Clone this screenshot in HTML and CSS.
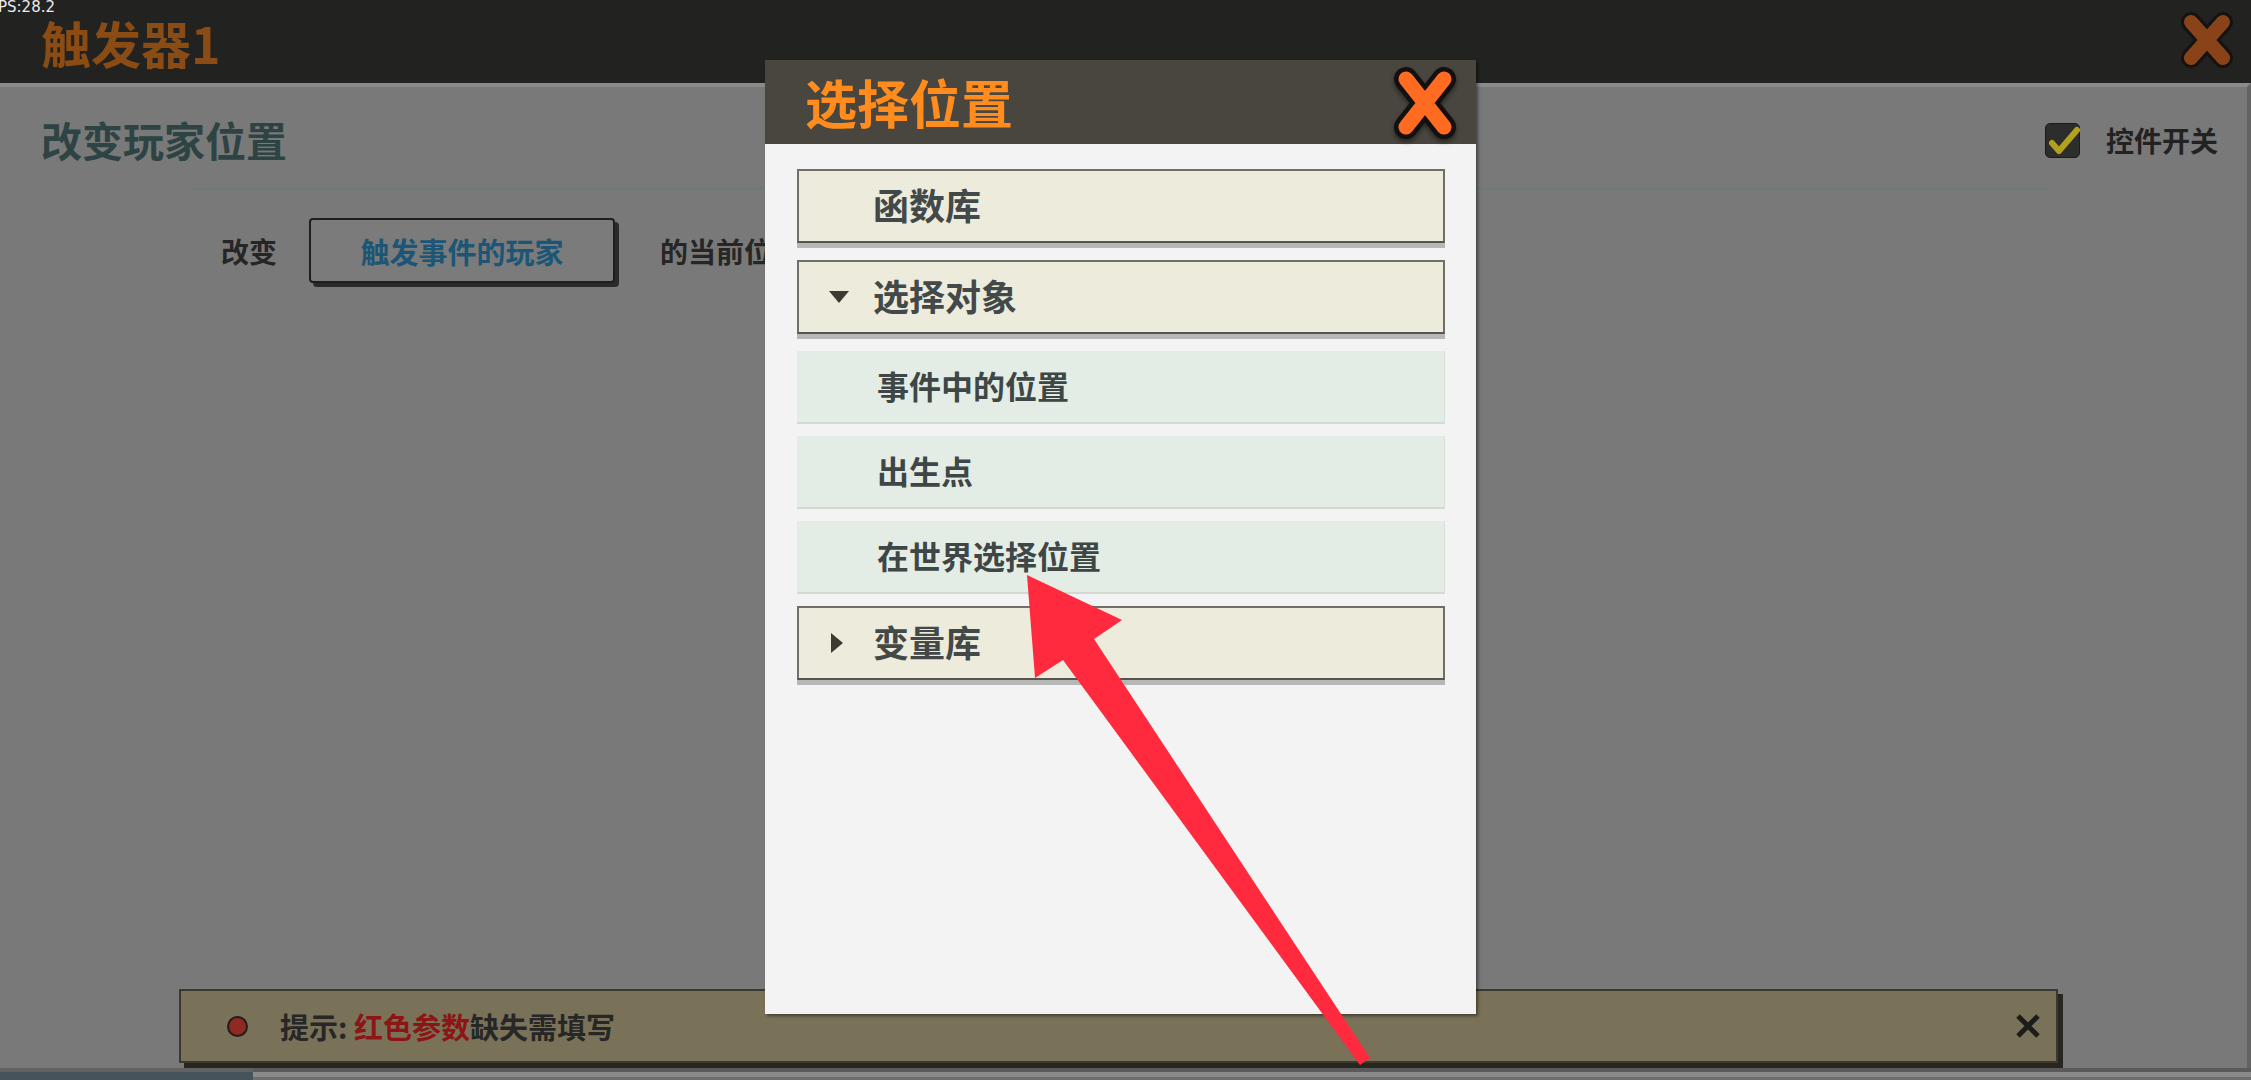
FILE: index.html
```html
<!DOCTYPE html>
<html lang="zh-CN">
<head>
<meta charset="utf-8">
<title>触发器1</title>
<link rel="stylesheet" href="styles.css">
</head>
<body>
<div class="screen">
  <span class="fps">PS:28.2</span>
  <header class="topbar">
    <h1 class="app-title">触发器1</h1>
    <span class="close-big">
      <svg viewBox="0 0 56 60" width="56" height="60">
        <path d="M12 12 L44 48 M44 12 L12 48" stroke="#151311" stroke-width="20" stroke-linecap="round" fill="none"/>
        <path d="M12 12 L44 48 M44 12 L12 48" stroke="#8a4319" stroke-width="14" stroke-linecap="round" fill="none"/>
      </svg>
    </span>
  </header>

  <main class="panel">
    <div class="panel-head">
      <h2 class="action-title">改变玩家位置</h2>
      <div class="toggle">
        <span class="checkbox">
          <svg viewBox="0 0 35 35" width="35" height="35">
            <path d="M6 19 L13 27 L31 6" stroke="#b3a01f" stroke-width="6" stroke-linecap="round" stroke-linejoin="round" fill="none"/>
          </svg>
        </span>
        <span>控件开关</span>
      </div>
    </div>
    <div class="divider"></div>
    <div class="sentence">
      <span>改变</span>
      <span class="param">触发事件的玩家</span>
      <span>的当前位置为</span>
    </div>

    <div class="notice">
      <span class="dot"></span>
      <span class="notice-text">提示: <span class="req">红色参数</span>缺失需填写</span>
      <span class="notice-close">
        <svg viewBox="0 0 28 28" width="28" height="28">
          <path d="M4 4 L24 24 M24 4 L4 24" stroke="#1c1c1a" stroke-width="5" fill="none"/>
        </svg>
      </span>
    </div>
  </main>
  <div class="bottom-strip">
    <span class="strip-left"></span>
    <span class="strip-right"></span>
  </div>

  <section class="modal">
    <div class="modal-head">
      <h3 class="modal-title">选择位置</h3>
      <span class="modal-close">
        <svg viewBox="0 0 72 78" width="72" height="78">
          <path d="M17 15 L55 63 M55 15 L17 63" stroke="#121110" stroke-width="24" stroke-linecap="round" fill="none"/>
          <path d="M17 15 L55 63 M55 15 L17 63" stroke="#ff6b21" stroke-width="15" stroke-linecap="round" fill="none"/>
        </svg>
      </span>
    </div>
    <div class="modal-body">
      <div class="group"><span class="caret-slot"></span>函数库</div>
      <div class="group"><span class="caret-slot"><span class="caret-down"></span></span>选择对象</div>
      <div class="option">事件中的位置</div>
      <div class="option">出生点</div>
      <div class="option">在世界选择位置</div>
      <div class="group"><span class="caret-slot"><span class="caret-right"></span></span>变量库</div>
    </div>
  </section>

  <svg class="arrow" viewBox="0 0 2251 1080" width="2251" height="1080">
    <polygon points="1027,575 1122,620 1094,639 1370,1058 1360,1065 1063,660 1035,678" fill="#ff2a3d"/>
  </svg>
</div>
</body>
</html>
```

FILE: styles.css
```css
* {
  box-sizing: border-box;
  margin: 0;
  padding: 0;
}

html,
body {
  width: 2251px;
  height: 1080px;
  overflow: hidden;
}

body {
  font-family: "Noto Sans CJK SC", "Noto Sans", sans-serif;
  background: #797979;
}

.screen {
  position: relative;
  width: 2251px;
  height: 1080px;
  display: flex;
  flex-direction: column;
}

.fps {
  position: absolute;
  left: -2px;
  top: -1px;
  font-family: "DejaVu Sans", sans-serif;
  font-size: 15px;
  line-height: 16px;
  color: #ececec;
  z-index: 5;
}

/* top bar */
.topbar {
  height: 83px;
  flex: none;
  background: #222220;
  display: flex;
  align-items: center;
  justify-content: space-between;
  padding: 0 16px 0 41px;
}

.app-title {
  font-size: 50px;
  font-weight: 700;
  line-height: 1;
  color: #8a4b15;
}

.close-big {
  display: block;
  width: 56px;
  height: 60px;
  margin-top: -4px;
}

.close-big svg,
.modal-close svg,
.notice-close svg,
.checkbox svg {
  display: block;
}

/* main panel */
.panel {
  flex: 1;
  display: flex;
  flex-direction: column;
  background: #797979;
  border-top: 4px solid #8b8b8b;
  border-right: 4px solid #636363;
}

.panel-head {
  height: 100px;
  padding: 6px 29px 0 41px;
  display: flex;
  align-items: center;
  justify-content: space-between;
}

.action-title {
  font-size: 41px;
  font-weight: 700;
  line-height: 1.2;
  color: #2e4343;
}

.toggle {
  display: flex;
  align-items: center;
  gap: 26px;
  font-size: 28px;
  font-weight: 700;
  color: #222222;
}

.checkbox {
  display: block;
  width: 35px;
  height: 35px;
  border-radius: 5px;
  background: #2d2d2c;
  border: 1px solid #1b1b1b;
  overflow: visible;
}

.divider {
  height: 3px;
  margin: 0 197px 0 191px;
  background: #6c7b74;
}

.sentence {
  display: flex;
  align-items: center;
  margin-top: 28px;
  padding-left: 221px;
  font-size: 28px;
  font-weight: 700;
  color: #262626;
}

.param {
  width: 306px;
  height: 65px;
  margin: 0 45px 0 32px;
  display: flex;
  align-items: center;
  justify-content: center;
  border: 2px solid #1e1e1e;
  border-radius: 4px;
  background: #7b7b7b;
  box-shadow: 4px 4px 0 #2a2a29;
  font-size: 29px;
  color: #1c5676;
}

/* notice */
.notice {
  margin: auto 0 5px 179px;
  width: 1879px;
  height: 74px;
  flex: none;
  display: flex;
  align-items: center;
  padding: 0 14px 0 46px;
  background: #7a7258;
  border: 2px solid #3b392f;
  box-shadow: 5px 5px 0 #27261f;
  font-size: 29px;
  font-weight: 700;
  color: #272727;
}

.dot {
  width: 21px;
  height: 21px;
  flex: none;
  border-radius: 50%;
  background: #8e2a21;
  border: 2px solid #1e1e1e;
  margin-right: 32px;
}

.notice-text {
  flex: 1;
}

.req {
  color: #8c1515;
}

.notice-close {
  display: block;
  width: 28px;
  height: 28px;
}

.bottom-strip {
  height: 12px;
  flex: none;
  display: flex;
  background: #5e5e5e;
}

.strip-left {
  width: 253px;
  background: #45535a;
  border-top: 4px solid #626262;
}

.strip-right {
  flex: 1;
  border-top: 4px solid #5a5a5a;
  border-bottom: 3px solid #6e6e6e;
  background: #8a8a8a;
}

/* modal */
.modal {
  position: absolute;
  left: 765px;
  top: 60px;
  width: 711px;
  height: 954px;
  display: flex;
  flex-direction: column;
  background: #f3f3f3;
  box-shadow: 2px 2px 3px rgba(0, 0, 0, 0.45);
  z-index: 2;
}

.modal-head {
  height: 84px;
  flex: none;
  display: flex;
  align-items: center;
  justify-content: space-between;
  padding: 0 15px 0 40px;
  background: #48463e;
}

.modal-title {
  font-size: 52px;
  font-weight: 700;
  line-height: 1;
  color: #ff8c1c;
}

.modal-close {
  display: block;
  width: 72px;
  height: 78px;
  margin-top: 2px;
  filter: drop-shadow(0 3px 2px rgba(0, 0, 0, 0.45));
}

.modal-body {
  display: flex;
  flex-direction: column;
  gap: 12px;
  padding: 25px 31px 0 32px;
}

.group {
  height: 74px;
  margin-bottom: 5px;
  display: flex;
  align-items: center;
  padding: 0 0 4px 30px;
  background: #ecebdc;
  border: 2px solid #6f6f67;
  border-bottom-color: #55554e;
  box-shadow: 0 5px 0 #b7b7b7;
  font-size: 36px;
  font-weight: 700;
  color: #434848;
}

.caret-slot {
  width: 44px;
  flex: none;
  display: flex;
  align-items: center;
  margin-top: 4px;
}

.caret-down {
  width: 0;
  height: 0;
  border-left: 10px solid transparent;
  border-right: 10px solid transparent;
  border-top: 12px solid #3d3a31;
}

.caret-right {
  width: 0;
  height: 0;
  margin-left: 2px;
  border-top: 10px solid transparent;
  border-bottom: 10px solid transparent;
  border-left: 12px solid #3d3a31;
}

.option {
  height: 73px;
  display: flex;
  align-items: center;
  padding: 0 0 3px 80px;
  background: #e3ede5;
  border-bottom: 2px solid #d3dad3;
  border-right: 1px solid #d9e0d9;
  font-size: 32px;
  font-weight: 700;
  color: #3f4646;
}

/* annotation arrow */
.arrow {
  position: absolute;
  left: 0;
  top: 0;
  pointer-events: none;
  z-index: 3;
}
```
